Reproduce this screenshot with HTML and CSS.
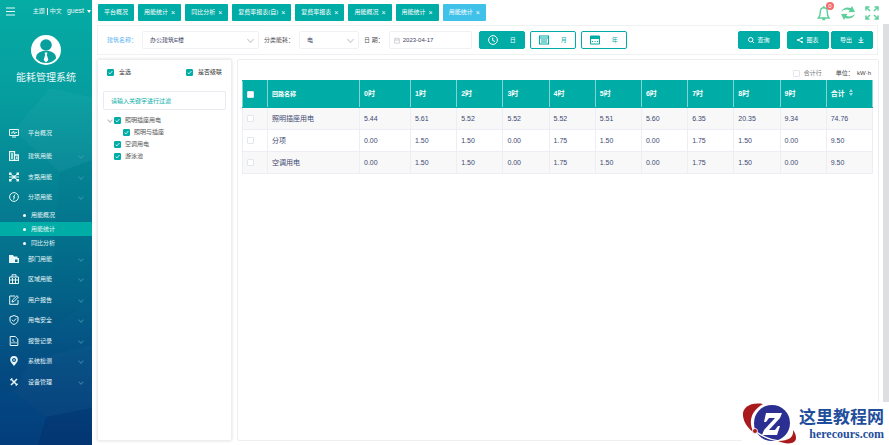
FILE: index.html
```html
<!DOCTYPE html>
<html lang="zh-CN">
<head>
	<meta charset="UTF-8">
	<meta name="viewport" content="width=device-width, initial-scale=1">
	<title>能耗管理系统</title>
	<link rel="stylesheet" href="styles.css">
</head>
<body>
	<aside class="sidebar">
		<svg class="facets" viewBox="0 0 92 445" preserveAspectRatio="none">
			<path d="M50 88 92 97V160L60 172 14 130z" fill="#fff" opacity=".03"/>
			<path d="M92 160 60 172 48 330 92 300z" fill="#002f6c" opacity=".04"/>
			<path d="M14 392 46 417 92 408V345L30 360z" fill="#fff" opacity=".02"/>
			<path d="M46 417 38 445H92V408z" fill="#001c55" opacity=".12"/>
			<path d="M0 392H14L46 417 38 445H0z" fill="#0060a0" opacity=".08"/>
		</svg>
		<div class="user-bar">
			<button class="fold" aria-label="菜单"><svg viewBox="0 0 9 9"><path d="M0 1h9M0 4.500h9M0 8h9"/></svg></button>
			<a href="#">主题</a><i></i><a href="#">中文</a>
			<a class="guest" href="#">guest <svg viewBox="0 0 4 3"><path d="M0 0h4L2 3z"/></svg></a>
		</div>
		<svg class="avatar" viewBox="0 0 30 30">
			<circle cx="15" cy="15" r="15" fill="#fff"/>
			<circle cx="15" cy="10" r="5.800" fill="#07a09c"/>
			<path d="M5 23.500c0-4.500 2.500-6.500 7-7.500h6c4.500 1 7 3 7 7.500-3 3-6 4.500-10 4.500s-7-1.500-10-4.500z" fill="#07a09c"/>
			<path d="M11.500 16.500h7L15 20z" fill="#07a09c"/>
			<path d="M13.500 17.500h3l-.7 2 1.500 5.500-2.300 2.500-2.300-2.500 1.500-5.500z" fill="#fff"/>
		</svg>
		<h1>能耗管理系统</h1>
		<ul class="menu">
			<li class="home"><a href="#"><svg viewBox="0 0 10 10"><path d="M.5 1.500h9v6h-9zM3 9h4M2 5h1.500l1-2 1 3 1-1.500H8"/></svg>平台概况</a></li>
			<li class="more"><a href="#"><svg viewBox="0 0 10 10"><path d="M.5 9.500V.7h5v8.800zM6 4h3.500v5.500H0M2 3h2M2 5h2M2 7h2M7.800 5.500v2.500" stroke-width="1.300"/></svg>建筑用能</a></li>
			<li class="more"><a href="#"><svg viewBox="0 0 10 10"><path d="M1 1.500 9 8.500M9 1.500 1 8.500M0 5h10" /><path class="solid" d="M3.500 3.500h3v3h-3zM0 .5h2.500V3H0zM7.500.5H10V3H7.500zM0 7h2.500v2.500H0zM7.500 7H10v2.500H7.500z"/></svg>支路用能</a></li>
			<li class="more"><a href="#"><svg viewBox="0 0 10 10"><circle cx="5" cy="5" r="4.400"/><path d="M6 2.500 4.500 5h1L4.500 7.500"/></svg>分项用能</a>
				<ul class="submenu">
					<li><a href="#">用能概况</a></li>
					<li class="active"><a href="#">用能统计</a></li>
					<li><a href="#">同比分析</a></li>
				</ul>
			</li>
			<li class="more"><a href="#"><svg viewBox="0 0 10 10"><path class="solid" fill-rule="evenodd" d="M0 1h4l1 1.500h3.500V4H10v5H0zM6 5.500v2.500h2.500V5.500z"/></svg>部门用能</a></li>
			<li class="more"><a href="#"><svg viewBox="0 0 10 10"><path d="M.5 3h9v6.500h-9zM3 3V.8h4V3M.5 6h9M3.500 4v5M6.500 4v5"/></svg>区域用能</a></li>
			<li class="more"><a href="#"><svg viewBox="0 0 10 10"><path d="M6 1H.7v8.300H9V5M3 7l.5-2L8 .7 9.400 2 5 6.500z"/></svg>用户报告</a></li>
			<li class="more"><a href="#"><svg viewBox="0 0 10 10"><path d="M5 .5 9 2v3c0 2-1.500 3.500-4 4.500C2.500 8.500 1 7 1 5V2zM3 4.800l1.500 1.500L7.200 3.500"/></svg>用电安全</a></li>
			<li class="more"><a href="#"><svg viewBox="0 0 10 10"><path d="M1.200.5h5l2.600 2.600v6.400H1.200zM3 7.500V6M5 7.500V5M7 7.500V6M3 4h2"/></svg>报警记录</a></li>
			<li class="more"><a href="#"><svg viewBox="0 0 10 10"><path class="solid" fill-rule="evenodd" d="M5 10C3 7.500 1.200 6 1.200 3.800a3.800 3.800 0 0 1 7.600 0C8.800 6 7 7.500 5 10zM5 2a2 2 0 1 0 0 4 2 2 0 0 0 0-4z"/><path d="M4 4h2"/></svg>系统检测</a></li>
			<li class="more"><a href="#"><svg viewBox="0 0 10 10"><path d="M2 2l6 6M8 2 2 8" stroke-width="1.500"/><path d="M1 3l1.500-.5L3 1M7 9l.5-1.500L9 7"/></svg>设备管理</a></li>
		</ul>
	</aside>

	<main>
		<header>
			<nav class="tabs">
				<a href="#">平台概况</a>
				<a href="#">用能统计<b>×</b></a>
				<a href="#">同比分析<b>×</b></a>
				<a href="#">复费率报表(自)<b>×</b></a>
				<a href="#">复费率报表<b>×</b></a>
				<a href="#">用能概况<b>×</b></a>
				<a href="#">用能统计<b>×</b></a>
				<a class="current" href="#">用能统计<b>×</b></a>
			</nav>
			<div class="tools">
				<button class="bell" aria-label="消息">
					<svg viewBox="0 0 14 16"><path d="M1.500 13h10.500c-1.400-1.500-1.700-3-1.700-6C10.300 4 9 2.800 6.800 2.800S3.300 4 3.300 7c0 3-.4 4.500-1.800 6zM6.800 2.500V1M5.300 14.500h3" stroke-width="1.400"/></svg>
					<span class="badge">0</span>
				</button>
				<button aria-label="刷新"><svg viewBox="0 0 14 14"><path class="solid" d="M0 6C1.500 2 6 .5 9.800 2L11 0 14 6 7.500 6.200l1.200-2C6 3 3 3.500 0 6zM14 8c-1.500 4-6 5.500-9.800 4L3 14 0 8l6.500-.2-1.200 2c2.700 1.200 5.700.7 8.700-1.800z"/></svg></button>
				<button aria-label="全屏"><svg viewBox="0 0 14 14"><path d="M1 4.500V1h3.500M1 1l4 4M9.500 1H13v3.500M13 1 9 5M1 9.500V13h3.500M1 13l4-4M9.500 13H13V9.500M13 13 9 9" stroke-width="1.500"/></svg></button>
			</div>
		</header>

		<form class="filter">
			<label class="blue" for="building">建筑名称：</label>
			<span class="select building"><select id="building"><option>办公建筑E楼</option></select></span>
			<label for="kind">分类能耗：</label>
			<span class="select kind"><select id="kind"><option>电</option></select></span>
			<label for="date">日 期：</label>
			<span class="date">
				<svg viewBox="0 0 7 7"><path d="M.5 1.500h6v5h-6zM.5 3h6M2 0v1.500M5 0v1.500"/></svg>
				<input id="date" type="text" value="2023-04-17">
			</span>
			<div class="period">
				<button type="button" class="btn"><svg viewBox="0 0 10 10"><circle cx="5" cy="5" r="4.400"/><path d="M4.700 2.500V5.500L7 6.500"/></svg>日</button>
				<button type="button" class="btn plain"><svg viewBox="0 0 10 10"><path d="M.5 1h9v8h-9zM.5 3h9M2 5h6M2 7h6" stroke-width="1.200"/></svg>月</button>
				<button type="button" class="btn plain"><svg viewBox="0 0 10 10"><path d="M.5 1h9v8h-9zM2 6.500h1M4.500 6.500h1M7 6.500h1"/><path class="solid" d="M0 1h10v3H0z"/></svg>年</button>
			</div>
			<div class="actions">
				<button type="button" class="btn search"><svg viewBox="0 0 6 6"><circle cx="2.700" cy="2.700" r="2.200"/><path d="M4.300 4.300 6 6"/></svg>查询</button>
				<button type="button" class="btn"><svg viewBox="0 0 6 6"><path d="M5 1 1 3l4 2"/><circle class="solid" cx="1" cy="3" r="1"/><circle class="solid" cx="5" cy="1" r="1"/><circle class="solid" cx="5" cy="5" r="1"/></svg>图表</button>
				<button type="button" class="btn export">导出<svg viewBox="0 0 6 6"><path d="M3 0v4M1 2.500l2 2 2-2M.5 5.600h5"/></svg></button>
			</div>
		</form>

		<div class="content">
			<section class="panel tree">
				<div class="tree-head">
					<label><input type="checkbox" checked>全选</label>
					<label><input type="checkbox" checked>是否级联</label>
				</div>
				<input class="search-box" type="text" placeholder="请输入关键字进行过滤" aria-label="过滤">
				<ul>
					<li class="open"><label><input type="checkbox" checked>照明插座用电</label>
						<ul>
							<li><label><input type="checkbox" checked>照明与插座</label></li>
						</ul>
					</li>
					<li><label><input type="checkbox" checked>空调用电</label></li>
					<li><label><input type="checkbox" checked>游泳池</label></li>
				</ul>
			</section>

			<section class="panel report">
				<div class="report-head">
					<label><input type="checkbox">合计行</label>
					<span>单位：&nbsp; kW·h</span>
				</div>
				<table>
					<colgroup>
						<col class="c-check"><col class="c-name"><col class="c-first">
						<col><col><col><col><col><col><col><col><col><col>
					</colgroup>
					<thead>
						<tr>
							<th><input type="checkbox" aria-label="全选"></th><th class="name">回路名称</th>
							<th>0时</th><th>1时</th><th>2时</th><th>3时</th><th>4时</th><th>5时</th><th>6时</th><th>7时</th><th>8时</th><th>9时</th>
							<th>合计<svg class="sort" viewBox="0 0 4 7"><path d="M0 3 2 0l2 3zM0 4h4L2 7z"/></svg></th>
						</tr>
					</thead>
					<tbody>
						<tr>
							<td><input type="checkbox" aria-label="照明插座用电"></td><td>照明插座用电</td>
							<td>5.44</td><td>5.61</td><td>5.52</td><td>5.52</td><td>5.52</td><td>5.51</td><td>5.60</td><td>6.35</td><td>20.35</td><td>9.34</td><td>74.76</td>
						</tr>
						<tr>
							<td><input type="checkbox" aria-label="分项"></td><td>分项</td>
							<td>0.00</td><td>1.50</td><td>1.50</td><td>0.00</td><td>1.75</td><td>1.50</td><td>0.00</td><td>1.75</td><td>1.50</td><td>0.00</td><td>9.50</td>
						</tr>
						<tr>
							<td><input type="checkbox" aria-label="空调用电"></td><td>空调用电</td>
							<td>0.00</td><td>1.50</td><td>1.50</td><td>0.00</td><td>1.75</td><td>1.50</td><td>0.00</td><td>1.75</td><td>1.50</td><td>0.00</td><td>9.50</td>
						</tr>
					</tbody>
				</table>
			</section>
		</div>
	</main>
	<div class="scrollbar"></div>

	<div class="brand">
		<svg viewBox="0 0 56 43">
			<circle cx="30" cy="21" r="18" fill="#2b2f92"/>
			<path d="M21 2C9 0 0 5 1 14c1 7 5 12 11 17C7 22 7 10 21 2z" fill="#a81a1c"/>
			<path d="M13 29c8 6 17 10 28 10" fill="none" stroke="#fff" stroke-width="1.500"/>
			<circle cx="13" cy="29" r="2.500" fill="#a81a1c" stroke="#fff" stroke-width=".8"/>
			<path d="M36 39c9 4 18 3 18-3 0-3-1-5-3-8 1 7-4 11-15 11z" fill="#a81a1c"/>
			<path d="M24 11h16l-2 5-11 12h6l3-4h2l-3 9H20l2-5 11-12h-6l-3 4h-2z" fill="#fff"/>
		</svg>
		<div>
			<strong>这里教程网</strong>
			<em>herecours.com</em>
		</div>
	</div>
</body>
</html>
```
FILE: styles.css
```css
*{
	box-sizing: border-box;
	margin: 0;
	padding: 0;
}
body{
	display: flex;
	height: 100vh;
	overflow: hidden;
	background: #fff;
	color: #555;
	font: 6px/12px "Liberation Sans", "Noto Sans CJK SC", sans-serif;
}
ul{
	list-style: none;
}
a{
	color: inherit;
	text-decoration: none;
}
button, input, select{
	font: inherit;
	color: inherit;
	border: 0;
	background: none;
	outline: none;
}
svg{
	display: block;
	flex: none;
	fill: none;
	stroke: currentColor;
}
.solid{
	fill: currentColor;
	stroke: none;
}
input[type=checkbox]{
	appearance: none;
	flex: none;
	width: 7px;
	height: 7px;
	border: 1px solid #e3e6ec;
	border-radius: 1px;
	background: #fff;
}
input[type=checkbox]:checked{
	border-color: #00aca6;
	background: #00aca6 url("data:image/svg+xml,%3Csvg xmlns='http://www.w3.org/2000/svg' viewBox='0 0 5 5'%3E%3Cpath d='M.6 2.500 2 3.900 4.400 1' fill='none' stroke='white' stroke-width='.8'/%3E%3C/svg%3E");
}

/* 左侧菜单 */
.sidebar{
	position: relative;
	flex: none;
	width: 92px;
	color: #e8f8f8;
	background: linear-gradient(#05aca4, #069d9f 22%, #058594 40%, #04698a 62%, #044c82 82%, #043a78);
}
.facets{
	position: absolute;
	top: 0;
	left: 0;
	width: 100%;
	height: 100%;
	stroke: none;
}
.sidebar > :not(.facets){
	position: relative;
}
.user-bar{
	display: flex;
	align-items: center;
	height: 22px;
	padding: 0 1px 0 6px;
}
.fold{
	margin-right: auto;
}
.fold svg{
	width: 9px;
	height: 9px;
}
.user-bar i{
	width: 1px;
	height: 7px;
	margin: 0 2px;
	background: #fff;
}
.user-bar .guest{
	display: flex;
	align-items: center;
	gap: 3px;
	margin-left: 5px;
	font-size: 7px;
}
.guest svg{
	width: 4px;
	height: 3px;
	fill: #fff;
	stroke: none;
}
.avatar{
	width: 30px;
	height: 30px;
	margin: 13px auto 0;
	stroke: none;
}
h1{
	margin-top: 5px;
	font-size: 10px;
	line-height: 16px;
	font-weight: normal;
	text-align: center;
}
.menu{
	margin-top: 37px;
}
.menu > li > a{
	display: flex;
	align-items: center;
	gap: 9px;
	height: 20px;
	padding: 0 9px;
}
.menu > li:nth-child(even){
	padding-bottom: 1px;
}
.menu > .home{
	padding-bottom: 3px;
}
.menu svg{
	width: 10px;
	height: 10px;
}
.more > a::after{
	content: "";
	width: 3px;
	height: 3px;
	margin-left: auto;
	border: solid #4ea3b5;
	border-width: 0 1px 1px 0;
	transform: rotate(45deg);
	opacity: .6;
}
.submenu a{
	display: flex;
	align-items: center;
	gap: 5px;
	height: 14px;
	padding-left: 23px;
}
.submenu li:first-child{
	padding-top: 1px;
}
.submenu a::before{
	content: "";
	width: 3px;
	height: 3px;
	border-radius: 50%;
	background: #fff;
}
.submenu .active{
	background: #00aca6;
}
.submenu li:last-child{
	margin-bottom: -2px;
}

/* 右侧内容 */
main{
	display: flex;
	flex-direction: column;
	flex: 1;
	min-width: 0;
	padding: 0 4px 4px 5px;
}
header{
	display: flex;
	justify-content: space-between;
	align-items: center;
	height: 25px;
}
.tabs{
	display: flex;
	gap: 4px;
	padding-left: 1px;
}
.tabs a{
	display: flex;
	gap: 3px;
	padding: 0 6px;
	border-radius: 1px;
	background: #00aca6;
	color: #fff;
	line-height: 17px;
}
.tabs b{
	font-size: 7px;
	font-weight: normal;
}
.tabs .current{
	background: #3fc1ea;
}
.tools{
	display: flex;
	align-items: center;
	gap: 10px;
	color: #5ccf9c;
}
.tools svg{
	width: 14px;
	height: 14px;
}
.bell{
	position: relative;
}
.bell svg{
	height: 16px;
}
.badge{
	position: absolute;
	top: -3px;
	right: -3px;
	width: 8px;
	height: 8px;
	border-radius: 50%;
	background: #f56c6c;
	color: #fff;
	line-height: 8px;
}
.filter{
	display: flex;
	align-items: center;
	gap: 5px;
	height: 30px;
	margin-right: 1px;
	padding: 0 4px 0 9px;
	border: 1px solid #f0f1f3;
}
.filter .blue{
	color: #5ab4f0;
}
.select, .date{
	display: flex;
	align-items: center;
	height: 18px;
	border: 1px solid #eff1f5;
	border-radius: 2px;
	color: #3d4463;
}
.select select{
	appearance: none;
	flex: 1;
	min-width: 0;
	padding-left: 7px;
}
.select::after{
	content: "";
	width: 4px;
	height: 4px;
	margin: 0 5px 2px 0;
	border: solid #c9ccd3;
	border-width: 0 1px 1px 0;
	transform: rotate(45deg);
}
.building{
	width: 117px;
}
.kind{
	width: 60px;
}
.date{
	width: 83px;
	gap: 3px;
	padding-left: 4px;
}
.date svg{
	width: 6px;
	height: 7px;
	color: #c9ccd3;
}
.date input{
	flex: 1;
	min-width: 0;
}
.period{
	display: flex;
	gap: 5px;
	margin-left: 2px;
}
.btn{
	display: flex;
	align-items: center;
	justify-content: center;
	gap: 3px;
	width: 42px;
	height: 18px;
	border: 1px solid #00aca6;
	border-radius: 2px;
	background: #00aca6;
	color: #fff;
}
.btn svg{
	width: 6px;
	height: 6px;
}
.period .btn{
	justify-content: space-between;
	width: 46px;
	padding: 0 8px;
}
.period svg{
	width: 10px;
	height: 10px;
}
.period .plain{
	background: #fff;
	color: #00aca6;
}
.actions{
	display: flex;
	gap: 2px;
	margin-left: auto;
}
.actions .search{
	margin-right: 5px;
}
.export{
	gap: 6px;
}

.content{
	display: flex;
	gap: 5px;
	flex: 1;
	min-height: 0;
	margin-top: 4px;
}
.panel{
	border: 1px solid #eceef1;
	border-radius: 2px;
}
.tree{
	flex: none;
	width: 135px;
	padding: 6px 5px;
	box-shadow: 0 0 3px #ddd;
}
.tree label, .report-head label{
	display: flex;
	align-items: center;
	gap: 4px;
}
.tree-head{
	display: flex;
	justify-content: space-between;
	padding: 0 4px;
	color: #333;
}
.tree-head label{
	gap: 5px;
}
.search-box{
	width: 100%;
	height: 19px;
	margin: 13px 0 4px;
	padding: 0 7px;
	border: 1px solid #e8ebf0;
	border-radius: 2px;
}
.search-box::placeholder{
	color: #00aca6;
	opacity: 1;
}
.tree li{
	position: relative;
	padding-left: 11px;
}
.tree li li{
	padding-left: 9px;
}
.tree .open::before{
	content: "";
	position: absolute;
	top: 4px;
	left: 5px;
	width: 3px;
	height: 3px;
	border: solid #bbb;
	border-width: 0 1px 1px 0;
	transform: rotate(45deg);
}
.report{
	flex: 1;
	min-width: 0;
	padding: 7px 5px 0 4px;
}
.report-head{
	display: flex;
	justify-content: flex-end;
	gap: 14px;
	margin-bottom: 1px;
	padding-right: 2px;
	color: #444;
}
.report-head label{
	color: #777;
}
table{
	width: 100%;
	border-collapse: collapse;
	table-layout: fixed;
	font-size: 7px;
	color: #414a73;
}
.c-check{
	width: 25px;
}
.c-name{
	width: 92px;
}
.c-first{
	width: 51px;
}
th, td{
	height: 22px;
	padding: 0 4px;
	border: 1px solid #ebeef3;
	text-align: left;
	vertical-align: middle;
}
th{
	height: 27px;
	border-color: #00aca6 #7fd5d2;
	background: #00aca6;
	color: #fff;
}
.name{
	font-size: 6px;
}
table input[type=checkbox]{
	display: block;
}
tbody tr:nth-child(odd){
	background: #f8f8f8;
}
.sort{
	display: inline-block;
	width: 4px;
	height: 7px;
	margin-left: 4px;
	fill: #9fe0dd;
	stroke: none;
}
.scrollbar{
	flex: none;
	width: 6px;
	margin: 24px 0 0;
	background: #dedfe3;
}

/* 右下角标志 */
.brand{
	position: absolute;
	right: 0;
	bottom: 0;
	display: flex;
	align-items: center;
	gap: 1px;
	padding-right: 5px;
	background: #fff;
	color: #1f4e9c;
}
.brand svg{
	width: 56px;
	height: 43px;
	stroke: none;
}
.brand strong, .brand em{
	display: block;
	font: bold 17px/20px "Noto Sans CJK SC", sans-serif;
}
.brand em{
	font: bold 12px/16px "Liberation Serif", serif;
	text-align: right;
}
```
